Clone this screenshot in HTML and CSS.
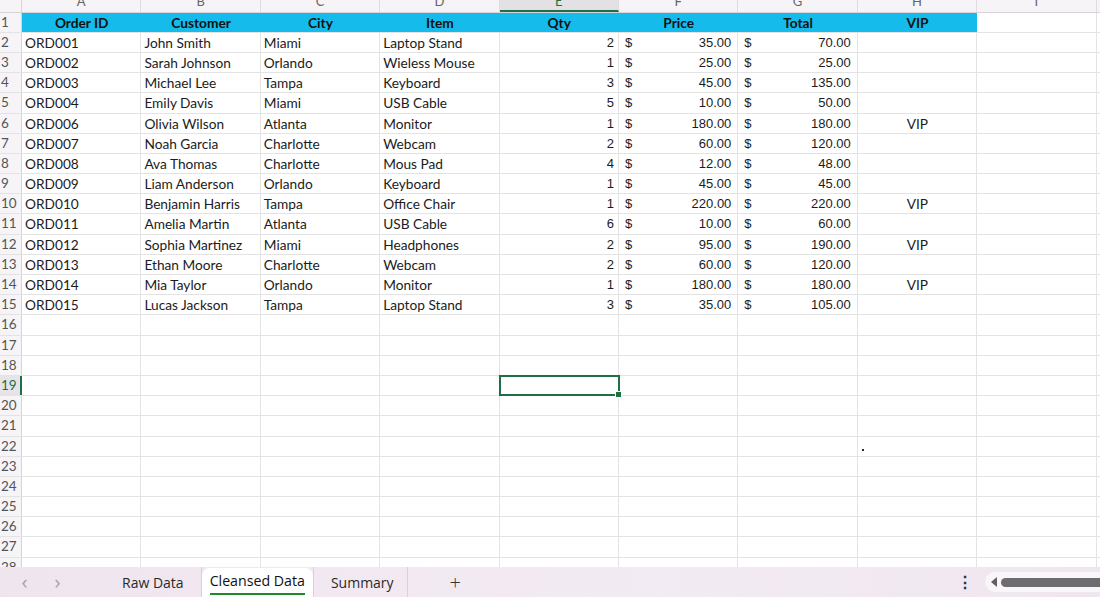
FILE: index.html
```html
<!DOCTYPE html>
<html lang="en">
<head>
  <meta charset="UTF-8">
  <title>Cleansed Data</title>
  <link rel="stylesheet" href="styles.css">
</head>
<body>
  <div class="sheet">
    <!-- column letters -->
    <div class="row heads">
      <div class="rh corner"></div>
      <div class="ch">A</div><div class="ch">B</div><div class="ch">C</div><div class="ch">D</div>
      <div class="ch active">E</div><div class="ch">F</div><div class="ch">G</div><div class="ch">H</div>
      <div class="ch">I</div><div class="ch">J</div>
    </div>

    <div class="row">
      <div class="rh">1</div>
      <div class="c th">Order ID</div><div class="c th">Customer</div><div class="c th">City</div><div class="c th">Item</div>
      <div class="c th">Qty</div><div class="c th">Price</div><div class="c th">Total</div><div class="c th">VIP</div>
    </div>

    <div class="row"><div class="rh">2</div><div class="c">ORD001</div><div class="c">John Smith</div><div class="c">Miami</div><div class="c">Laptop Stand</div><div class="c num">2</div><div class="c cur"><span>$</span><span>35.00</span></div><div class="c cur"><span>$</span><span>70.00</span></div></div>
    <div class="row"><div class="rh">3</div><div class="c">ORD002</div><div class="c">Sarah Johnson</div><div class="c">Orlando</div><div class="c">Wieless Mouse</div><div class="c num">1</div><div class="c cur"><span>$</span><span>25.00</span></div><div class="c cur"><span>$</span><span>25.00</span></div></div>
    <div class="row"><div class="rh">4</div><div class="c">ORD003</div><div class="c">Michael Lee</div><div class="c">Tampa</div><div class="c">Keyboard</div><div class="c num">3</div><div class="c cur"><span>$</span><span>45.00</span></div><div class="c cur"><span>$</span><span>135.00</span></div></div>
    <div class="row"><div class="rh">5</div><div class="c">ORD004</div><div class="c">Emily Davis</div><div class="c">Miami</div><div class="c">USB Cable</div><div class="c num">5</div><div class="c cur"><span>$</span><span>10.00</span></div><div class="c cur"><span>$</span><span>50.00</span></div></div>
    <div class="row"><div class="rh">6</div><div class="c">ORD006</div><div class="c">Olivia Wilson</div><div class="c">Atlanta</div><div class="c">Monitor</div><div class="c num">1</div><div class="c cur"><span>$</span><span>180.00</span></div><div class="c cur"><span>$</span><span>180.00</span></div><div class="c mid">VIP</div></div>
    <div class="row"><div class="rh">7</div><div class="c">ORD007</div><div class="c">Noah Garcia</div><div class="c">Charlotte</div><div class="c">Webcam</div><div class="c num">2</div><div class="c cur"><span>$</span><span>60.00</span></div><div class="c cur"><span>$</span><span>120.00</span></div></div>
    <div class="row"><div class="rh">8</div><div class="c">ORD008</div><div class="c">Ava Thomas</div><div class="c">Charlotte</div><div class="c">Mous Pad</div><div class="c num">4</div><div class="c cur"><span>$</span><span>12.00</span></div><div class="c cur"><span>$</span><span>48.00</span></div></div>
    <div class="row"><div class="rh">9</div><div class="c">ORD009</div><div class="c">Liam Anderson</div><div class="c">Orlando</div><div class="c">Keyboard</div><div class="c num">1</div><div class="c cur"><span>$</span><span>45.00</span></div><div class="c cur"><span>$</span><span>45.00</span></div></div>
    <div class="row"><div class="rh">10</div><div class="c">ORD010</div><div class="c">Benjamin Harris</div><div class="c">Tampa</div><div class="c">Office Chair</div><div class="c num">1</div><div class="c cur"><span>$</span><span>220.00</span></div><div class="c cur"><span>$</span><span>220.00</span></div><div class="c mid">VIP</div></div>
    <div class="row"><div class="rh">11</div><div class="c">ORD011</div><div class="c">Amelia Martin</div><div class="c">Atlanta</div><div class="c">USB Cable</div><div class="c num">6</div><div class="c cur"><span>$</span><span>10.00</span></div><div class="c cur"><span>$</span><span>60.00</span></div></div>
    <div class="row"><div class="rh">12</div><div class="c">ORD012</div><div class="c">Sophia Martinez</div><div class="c">Miami</div><div class="c">Headphones</div><div class="c num">2</div><div class="c cur"><span>$</span><span>95.00</span></div><div class="c cur"><span>$</span><span>190.00</span></div><div class="c mid">VIP</div></div>
    <div class="row"><div class="rh">13</div><div class="c">ORD013</div><div class="c">Ethan Moore</div><div class="c">Charlotte</div><div class="c">Webcam</div><div class="c num">2</div><div class="c cur"><span>$</span><span>60.00</span></div><div class="c cur"><span>$</span><span>120.00</span></div></div>
    <div class="row"><div class="rh">14</div><div class="c">ORD014</div><div class="c">Mia Taylor</div><div class="c">Orlando</div><div class="c">Monitor</div><div class="c num">1</div><div class="c cur"><span>$</span><span>180.00</span></div><div class="c cur"><span>$</span><span>180.00</span></div><div class="c mid">VIP</div></div>
    <div class="row"><div class="rh">15</div><div class="c">ORD015</div><div class="c">Lucas Jackson</div><div class="c">Tampa</div><div class="c">Laptop Stand</div><div class="c num">3</div><div class="c cur"><span>$</span><span>35.00</span></div><div class="c cur"><span>$</span><span>105.00</span></div></div>

    <div class="row"><div class="rh">16</div></div>
    <div class="row"><div class="rh">17</div></div>
    <div class="row"><div class="rh">18</div></div>
    <div class="row"><div class="rh active">19</div><div class="c"></div><div class="c"></div><div class="c"></div><div class="c"></div><div class="c sel"></div></div>
    <div class="row"><div class="rh">20</div></div>
    <div class="row"><div class="rh">21</div></div>
    <div class="row"><div class="rh">22</div><div class="c"></div><div class="c"></div><div class="c"></div><div class="c"></div><div class="c"></div><div class="c"></div><div class="c"></div><div class="c"><i class="speck"></i></div></div>
    <div class="row"><div class="rh">23</div></div>
    <div class="row"><div class="rh">24</div></div>
    <div class="row"><div class="rh">25</div></div>
    <div class="row"><div class="rh">26</div></div>
    <div class="row"><div class="rh">27</div></div>
    <div class="row"><div class="rh">28</div></div>
  </div>

  <div class="tabs">
    <span class="nav">&#8249;</span>
    <span class="nav">&#8250;</span>
    <div class="tab">Raw Data</div>
    <div class="tab current"><span>Cleansed Data</span></div>
    <div class="tab">Summary</div>
    <div class="add">+</div>
    <div class="more">&#8942;</div>
    <div class="scroll">
      <svg width="8" height="10" viewBox="0 0 8 10"><path d="M7 0 L1 5 L7 10 Z" fill="#606060"/></svg>
      <div class="thumb"></div>
    </div>
  </div>
</body>
</html>
```

FILE: styles.css
```css
* {
  margin: 0;
  padding: 0;
  box-sizing: border-box;
}

body {
  width: 1100px;
  height: 597px;
  overflow: hidden;
  background: #ffffff;
  font-family: 'Lato', 'Open Sans', sans-serif;
  font-size: 13.7px;
  color: #1b1b22;
}

.sheet {
  height: 567px;
  overflow: hidden;
}

.row {
  display: flex;
  height: 20.2px;
  border-bottom: 1px solid #e3e3e3;
  background-image: repeating-linear-gradient(to right, transparent 0, transparent 118.4px, #e3e3e3 118.4px, #e3e3e3 119.4px);
  background-position: 22px 0;
}

.rh {
  flex: 0 0 22px;
  background: #f6f4f7;
  border-right: 1px solid #d6d4d8;
  color: #555555;
  font-size: 13.5px;
  line-height: 19px;
  padding-left: 1px;
}

.rh.active {
  background: #e6e4e8;
  border-right: 2px solid #1d7044;
  color: #1d7044;
}

/* column letters, mostly scrolled out of view */
.heads {
  height: 12.6px;
  border-bottom: 1px solid #d6d4d8;
  background: #f6f4f7;
  overflow: hidden;
}

.heads .rh {
  border-right: 1px solid #d6d4d8;
}

.ch {
  flex: 0 0 119.4px;
  border-right: 1px solid #dedce0;
  text-align: center;
  color: #666666;
  font-size: 13px;
  line-height: 14px;
  margin-top: -6px;
  height: 17.6px;
}

.ch.active {
  background: #e3e1e5;
  border-bottom: 2px solid #1d7044;
  color: #1d7044;
}

.c {
  flex: 0 0 119.4px;
  line-height: 20px;
  padding: 0 3px;
  white-space: nowrap;
  overflow: hidden;
  position: relative;
}

.th {
  background: #14bbeb;
  font-weight: 700;
  text-align: center;
  color: #111111;
}

.num {
  text-align: right;
  font-family: 'Liberation Sans', Arial, sans-serif;
  font-size: 13px;
  padding-right: 5px;
}

.cur {
  display: flex;
  justify-content: space-between;
  font-family: 'Liberation Sans', Arial, sans-serif;
  font-size: 13px;
  padding: 0 7px 0 6px;
}

.mid {
  text-align: center;
}

.sel {
  overflow: visible;
  outline: 2px solid #1e6f43;
  outline-offset: -1px;
  z-index: 2;
}

.sel::after {
  content: '';
  position: absolute;
  right: -3px;
  bottom: -3px;
  width: 5px;
  height: 5px;
  background: #1e6f43;
  border: 1px solid #ffffff;
}

.speck {
  position: absolute;
  left: 4px;
  top: 12px;
  width: 2px;
  height: 2px;
  background: #222244;
}

/* sheet tabs */
.tabs {
  height: 30px;
  display: flex;
  align-items: center;
  background: linear-gradient(90deg, #efe5ef, #f3ebf3 60%, #efe6f0);
  font-family: 'Open Sans', 'Noto Sans', sans-serif;
  font-size: 14px;
  color: #2a2a2a;
}

.nav {
  width: 33px;
  text-align: center;
  color: #a8a0aa;
  font-size: 20px;
  line-height: 30px;
}

.nav:first-child {
  margin-left: 8px;
}

.tab {
  height: 30px;
  line-height: 32px;
  padding: 0 18px;
  border-right: 1px solid #d9d0da;
}

.tab:nth-child(3) {
  margin-left: 30px;
  padding-right: 17px;
}

.tab.current {
  background: #ffffff;
  border-radius: 8px 8px 0 0;
  border-right: none;
  padding: 0 8px;
  margin-top: 2px;
  color: #111111;
  font-size: 14.2px;
  line-height: 26px;
}

.tab.current span {
  display: inline-block;
  border-bottom: 2px solid #1b8a2c;
  line-height: 24px;
}

.tab:nth-child(5) {
  border-left: 1px solid #d9d0da;
  padding-left: 17px;
  padding-right: 13px;
}

.add {
  margin-left: 42px;
  font-size: 20px;
  font-weight: 300;
  color: #333333;
}

.more {
  margin-left: auto;
  margin-right: 12px;
  font-size: 16px;
  font-weight: 700;
  color: #333333;
}

.scroll {
  width: 117px;
  height: 20px;
  margin-right: -2px;
  display: flex;
  align-items: center;
  gap: 3px;
  padding-left: 5px;
  background: #f9f5f9;
  border-radius: 10px 0 0 10px;
}

.thumb {
  flex: 1;
  height: 9px;
  background: #6e6c70;
  border-radius: 5px 0 0 5px;
}
```
